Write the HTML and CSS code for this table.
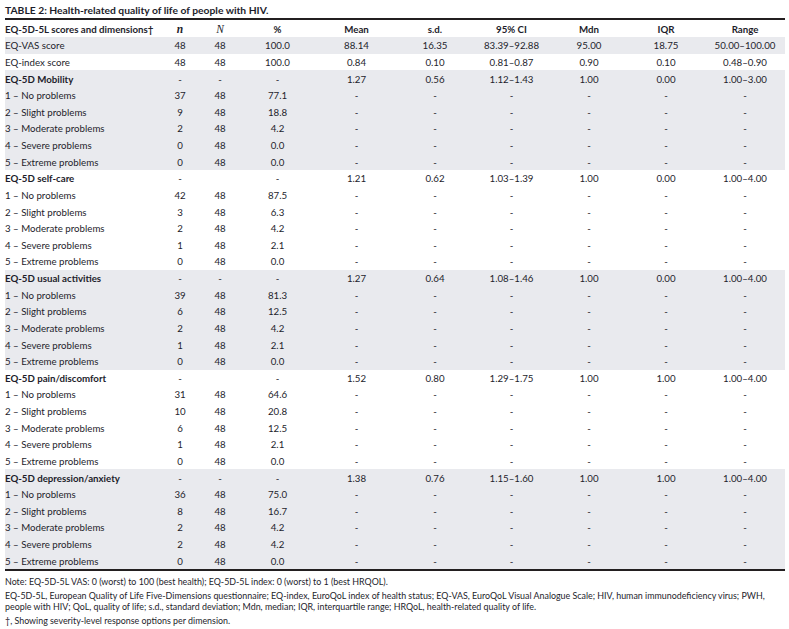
FILE: index.html
```html
<!DOCTYPE html>
<html>
<head>
<meta charset="utf-8">
<link rel="stylesheet" href="styles.css">
</head>
<body>
<div class="page">
  <div class="title">TABLE 2: Health-related quality of life of people with HIV.</div>
  <table class="data">
    <colgroup>
      <col class="c1"><col class="c2"><col class="c3"><col class="c4"><col class="c5"><col class="c6"><col class="c7"><col class="c8"><col class="c9"><col class="c10">
    </colgroup>
    <thead>
      <tr class="head">
        <th class="lbl">EQ-5D-5L scores and dimensions†</th>
        <th class="it b">n</th>
        <th class="it">N</th>
        <th>%</th>
        <th>Mean</th>
        <th>s.d.</th>
        <th>95% CI</th>
        <th>Mdn</th>
        <th>IQR</th>
        <th>Range</th>
      </tr>
    </thead>
    <tbody>
      <tr class="g"><td class="lbl">EQ-VAS score</td><td>48</td><td>48</td><td>100.0</td><td>88.14</td><td>16.35</td><td>83.39–92.88</td><td>95.00</td><td>18.75</td><td>50.00–100.00</td></tr>
      <tr><td class="lbl">EQ-index score</td><td>48</td><td>48</td><td>100.0</td><td>0.84</td><td>0.10</td><td>0.81–0.87</td><td>0.90</td><td>0.10</td><td>0.48–0.90</td></tr>

      <tr class="g"><td class="lbl b">EQ-5D Mobility</td><td>-</td><td>-</td><td>-</td><td>1.27</td><td>0.56</td><td>1.12–1.43</td><td>1.00</td><td>0.00</td><td>1.00–3.00</td></tr>
      <tr class="g"><td class="lbl">1 – No problems</td><td>37</td><td>48</td><td>77.1</td><td>-</td><td>-</td><td>-</td><td>-</td><td>-</td><td>-</td></tr>
      <tr class="g"><td class="lbl">2 – Slight problems</td><td>9</td><td>48</td><td>18.8</td><td>-</td><td>-</td><td>-</td><td>-</td><td>-</td><td>-</td></tr>
      <tr class="g"><td class="lbl">3 – Moderate problems</td><td>2</td><td>48</td><td>4.2</td><td>-</td><td>-</td><td>-</td><td>-</td><td>-</td><td>-</td></tr>
      <tr class="g"><td class="lbl">4 – Severe problems</td><td>0</td><td>48</td><td>0.0</td><td>-</td><td>-</td><td>-</td><td>-</td><td>-</td><td>-</td></tr>
      <tr class="g"><td class="lbl">5 – Extreme problems</td><td>0</td><td>48</td><td>0.0</td><td>-</td><td>-</td><td>-</td><td>-</td><td>-</td><td>-</td></tr>

      <tr><td class="lbl b">EQ-5D self-care</td><td>-</td><td></td><td>-</td><td>1.21</td><td>0.62</td><td>1.03–1.39</td><td>1.00</td><td>0.00</td><td>1.00–4.00</td></tr>
      <tr><td class="lbl">1 – No problems</td><td>42</td><td>48</td><td>87.5</td><td>-</td><td>-</td><td>-</td><td>-</td><td>-</td><td>-</td></tr>
      <tr><td class="lbl">2 – Slight problems</td><td>3</td><td>48</td><td>6.3</td><td>-</td><td>-</td><td>-</td><td>-</td><td>-</td><td>-</td></tr>
      <tr><td class="lbl">3 – Moderate problems</td><td>2</td><td>48</td><td>4.2</td><td>-</td><td>-</td><td>-</td><td>-</td><td>-</td><td>-</td></tr>
      <tr><td class="lbl">4 – Severe problems</td><td>1</td><td>48</td><td>2.1</td><td>-</td><td>-</td><td>-</td><td>-</td><td>-</td><td>-</td></tr>
      <tr><td class="lbl">5 – Extreme problems</td><td>0</td><td>48</td><td>0.0</td><td>-</td><td>-</td><td>-</td><td>-</td><td>-</td><td>-</td></tr>

      <tr class="g"><td class="lbl b">EQ-5D usual activities</td><td>-</td><td>-</td><td>-</td><td>1.27</td><td>0.64</td><td>1.08–1.46</td><td>1.00</td><td>0.00</td><td>1.00–4.00</td></tr>
      <tr class="g"><td class="lbl">1 – No problems</td><td>39</td><td>48</td><td>81.3</td><td>-</td><td>-</td><td>-</td><td>-</td><td>-</td><td>-</td></tr>
      <tr class="g"><td class="lbl">2 – Slight problems</td><td>6</td><td>48</td><td>12.5</td><td>-</td><td>-</td><td>-</td><td>-</td><td>-</td><td>-</td></tr>
      <tr class="g"><td class="lbl">3 – Moderate problems</td><td>2</td><td>48</td><td>4.2</td><td>-</td><td>-</td><td>-</td><td>-</td><td>-</td><td>-</td></tr>
      <tr class="g"><td class="lbl">4 – Severe problems</td><td>1</td><td>48</td><td>2.1</td><td>-</td><td>-</td><td>-</td><td>-</td><td>-</td><td>-</td></tr>
      <tr class="g"><td class="lbl">5 – Extreme problems</td><td>0</td><td>48</td><td>0.0</td><td>-</td><td>-</td><td>-</td><td>-</td><td>-</td><td>-</td></tr>

      <tr><td class="lbl b">EQ-5D pain/discomfort</td><td>-</td><td></td><td>-</td><td>1.52</td><td>0.80</td><td>1.29–1.75</td><td>1.00</td><td>1.00</td><td>1.00–4.00</td></tr>
      <tr><td class="lbl">1 – No problems</td><td>31</td><td>48</td><td>64.6</td><td>-</td><td>-</td><td>-</td><td>-</td><td>-</td><td>-</td></tr>
      <tr><td class="lbl">2 – Slight problems</td><td>10</td><td>48</td><td>20.8</td><td>-</td><td>-</td><td>-</td><td>-</td><td>-</td><td>-</td></tr>
      <tr><td class="lbl">3 – Moderate problems</td><td>6</td><td>48</td><td>12.5</td><td>-</td><td>-</td><td>-</td><td>-</td><td>-</td><td>-</td></tr>
      <tr><td class="lbl">4 – Severe problems</td><td>1</td><td>48</td><td>2.1</td><td>-</td><td>-</td><td>-</td><td>-</td><td>-</td><td>-</td></tr>
      <tr><td class="lbl">5 – Extreme problems</td><td>0</td><td>48</td><td>0.0</td><td>-</td><td>-</td><td>-</td><td>-</td><td>-</td><td>-</td></tr>

      <tr class="g"><td class="lbl b">EQ-5D depression/anxiety</td><td>-</td><td>-</td><td>-</td><td>1.38</td><td>0.76</td><td>1.15–1.60</td><td>1.00</td><td>1.00</td><td>1.00–4.00</td></tr>
      <tr class="g"><td class="lbl">1 – No problems</td><td>36</td><td>48</td><td>75.0</td><td>-</td><td>-</td><td>-</td><td>-</td><td>-</td><td>-</td></tr>
      <tr class="g"><td class="lbl">2 – Slight problems</td><td>8</td><td>48</td><td>16.7</td><td>-</td><td>-</td><td>-</td><td>-</td><td>-</td><td>-</td></tr>
      <tr class="g"><td class="lbl">3 – Moderate problems</td><td>2</td><td>48</td><td>4.2</td><td>-</td><td>-</td><td>-</td><td>-</td><td>-</td><td>-</td></tr>
      <tr class="g"><td class="lbl">4 – Severe problems</td><td>2</td><td>48</td><td>4.2</td><td>-</td><td>-</td><td>-</td><td>-</td><td>-</td><td>-</td></tr>
      <tr class="g"><td class="lbl">5 – Extreme problems</td><td>0</td><td>48</td><td>0.0</td><td>-</td><td>-</td><td>-</td><td>-</td><td>-</td><td>-</td></tr>
    </tbody>
  </table>
  <div class="notes">
    <p class="n1">Note: EQ-5D-5L VAS: 0 (worst) to 100 (best health); EQ-5D-5L index: 0 (worst) to 1 (best HRQOL).</p>
    <p class="n2">EQ-5D-5L, European Quality of Life Five-Dimensions questionnaire; EQ-index, EuroQoL index of health status; EQ-VAS, EuroQoL Visual Analogue Scale; HIV, human immunodeficiency virus; PWH, people with HIV; QoL, quality of life; s.d., standard deviation; Mdn, median; IQR, interquartile range; HRQoL, health-related quality of life.</p>
    <p class="n3">†, Showing severity-level response options per dimension.</p>
  </div>
</div>
</body>
</html>
```

FILE: styles.css
```css
html, body {
  margin: 0;
  padding: 0;
  background: #ffffff;
}

.page {
  padding: 3px 4px 0 5px;
  font-family: Lato, "Open Sans", sans-serif;
  color: #1d1d2b;
}

.title {
  font-weight: bold;
  font-size: 10.3px;
  line-height: 15px;
  height: 15px;
}

.data {
  width: 780px;
  border-collapse: collapse;
  table-layout: fixed;
  border-top: 2px solid #231f20;
  border-bottom: 2px solid #231f20;
  font-size: 9.7px;
}

.c1 { width: 155px; }
.c2 { width: 40px; }
.c3 { width: 40px; }
.c4 { width: 75px; }
.c5 { width: 83px; }
.c6 { width: 74px; }
.c7 { width: 79px; }
.c8 { width: 76px; }
.c9 { width: 78px; }
.c10 { width: 80px; }

.data th,
.data td {
  padding: 0;
  text-align: center;
  white-space: nowrap;
  font-weight: normal;
}

.data .head th {
  height: 17px;
  font-weight: bold;
}

.data tbody td {
  height: 16.625px;
  line-height: 16px;
}

.data .lbl {
  text-align: left;
}

.data .b {
  font-weight: bold;
}

.data .head .it {
  font-family: "Liberation Serif", serif;
  font-style: italic;
  font-size: 11.5px;
  font-weight: normal;
}

.data .head .it.b {
  font-weight: bold;
}

.data tr.g td {
  background: #e9eaee;
}

.notes {
  margin-top: 5px;
  font-size: 8.9px;
  line-height: 11px;
}

.notes p {
  margin: 0;
}

.notes .n2 {
  margin-top: 3px;
}

.notes .n3 {
  margin-top: 3px;
}
```
